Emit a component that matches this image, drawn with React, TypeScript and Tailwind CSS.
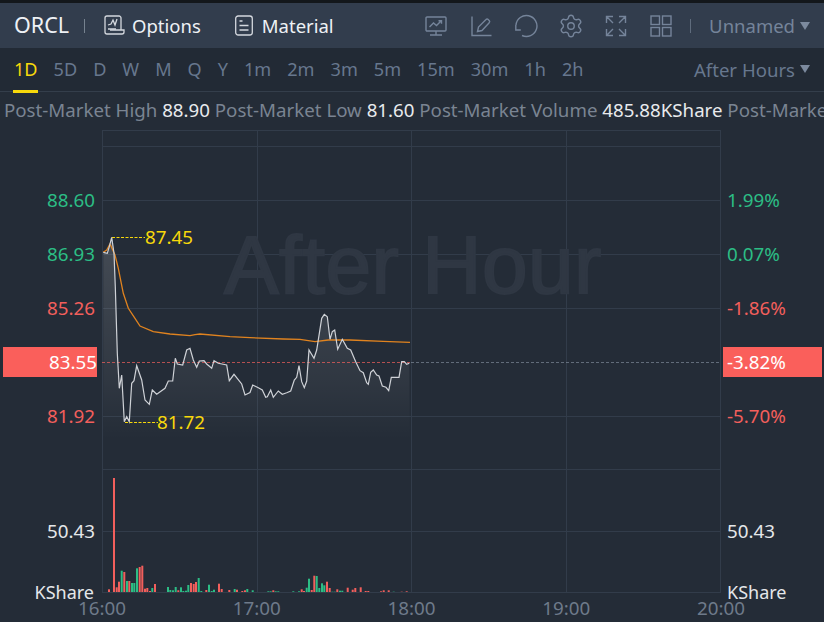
import React from "react";
import { Settings } from "lucide-react";

const RED = "#f25f5c";
const GREEN = "#2cbd85";
const GRID = "#323c4a";

const PERIODS = ["5D", "D", "W", "M", "Q", "Y", "1m", "2m", "3m", "5m", "15m", "30m", "1h", "2h"];
const TIMES = ["16:00", "17:00", "18:00", "19:00", "20:00"];

// price line, page pixels
const PRICE: [number, number][] = [
  [103.3, 252.3], [107.3, 253.3], [109.3, 246.7], [111.7, 237.3], [114, 253.3], [115.3, 286.7], [117.3, 353.3],
  [119.3, 388.3], [121.7, 375], [124.3, 421.7], [126.7, 416.7], [129.3, 421.7], [131.7, 383.3], [134, 380.7],
  [136.7, 365.7], [141.7, 380], [145, 400], [149.3, 404.3], [152.3, 390], [156.7, 394.3], [165, 388.3],
  [168.3, 381], [172.7, 381], [175.3, 358.3], [177.3, 364], [182.7, 365], [186.7, 350], [190, 348.3],
  [193.3, 360], [196.7, 367.3], [199.3, 361], [204, 360.7], [206.7, 364], [211.7, 368.3], [214, 360.7],
  [218.3, 363.3], [226.7, 365], [229.3, 380.7], [234, 374.3], [241.7, 384], [245, 395], [250, 392.5],
  [252.7, 385], [258.3, 387.7], [262.3, 390], [265.7, 397.3], [267.3, 396.7], [270.7, 390], [273.3, 397.3],
  [278.3, 391], [282.3, 394.3], [286.7, 392.7], [290.7, 391], [294.3, 380], [296.7, 377.3], [299, 365.7],
  [301.7, 381.7], [304.3, 387.7], [306.7, 381], [309, 350], [314, 358.3], [316.7, 350], [321.7, 318.3],
  [324.3, 314.3], [327.3, 316.7], [330, 339.3], [332.3, 331.7], [334.7, 330], [337.7, 349.3], [342.3, 339.3],
  [347.3, 348.3], [350.7, 350], [355.7, 361.7], [360, 370.7], [363.3, 372.7], [366.7, 382.7], [368.3, 384.3],
  [370.7, 372.3], [373.3, 370], [376.7, 375], [379, 376], [382.3, 386], [386, 387.3], [388.7, 390.7],
  [391.3, 377.3], [399, 377.3], [401.7, 361.7], [404.3, 361.7], [406.7, 364.3], [409.3, 363.3],
];

const AVERAGE: [number, number][] = [
  [103.3, 252.3], [106.7, 250], [110, 244], [115, 255], [118.3, 268.3], [123.3, 293.3], [128.3, 308.3],
  [135, 318.3], [140, 326], [153.3, 331.7], [170, 334], [190, 335.7], [195, 334.7], [200, 334], [230, 336.7],
  [250, 337.7], [283.3, 339], [300, 339.3], [315, 341.7], [328.3, 340], [350, 340], [383.3, 341.3], [410, 342.3],
];

// volume bars: x, top, up?
const VOLUME: [number, number, number][] = [
  [109, 589.3, 0], [114, 478, 0], [116.7, 587.3, 0], [119, 581.7, 0], [121.7, 570.7, 1], [124.3, 572, 0],
  [127, 581, 1], [129.3, 581, 0], [132, 583, 1], [134.3, 583, 1], [137, 568.3, 1], [139.7, 567, 0],
  [142.3, 565.7, 0], [145, 588.7, 0], [147.3, 588, 0], [150, 591, 0], [152.3, 588, 1], [155, 584, 0],
  [168, 587, 1], [170.3, 590, 1], [173, 590.3, 1], [175.7, 587, 1], [178.3, 590.3, 0], [181, 587.3, 1],
  [183.3, 591, 1], [186, 590.7, 1], [188.3, 585, 1], [191, 583, 0], [193.7, 584, 0], [196, 582, 0],
  [198.7, 578, 1], [201.3, 591, 1], [206.3, 590, 0], [209, 584.7, 1], [211.7, 591, 1], [214, 589.7, 1],
  [219, 583.7, 0], [221.7, 589, 0], [229.3, 590, 0], [234.7, 589, 1], [237, 589.7, 0], [242.3, 591, 0],
  [245, 590.3, 0], [247.3, 589, 1], [252.7, 590.3, 1], [268.3, 591.3, 1], [270.7, 591.3, 1], [273.3, 590.3, 0],
  [275.7, 591.3, 1], [278.3, 591.3, 1], [293.3, 591.3, 1], [299, 591.3, 1], [301.7, 589.3, 0], [304, 591, 0],
  [306.7, 587.7, 1], [309, 578.7, 1], [311.7, 590, 0], [314.3, 575.7, 0], [316.7, 576, 1], [319.3, 588, 1],
  [322, 583.3, 1], [324.3, 585.3, 1], [327, 581.7, 0], [329.7, 588, 0], [332.3, 591.7, 1], [334.7, 591.7, 1],
  [337.3, 589.3, 0], [340, 590.7, 1], [342.3, 590.7, 1], [347.7, 587.7, 0], [352.7, 589.7, 0], [355.3, 588, 0],
  [360.7, 587.3, 0], [365.7, 591, 0], [368.3, 591, 0], [381, 591.3, 0], [383.7, 590.3, 0], [388.7, 590.3, 0],
  [393.7, 591.7, 1], [401.7, 591.7, 0], [406.7, 591.3, 0],
];

const toPoints = (pts: [number, number][]) => pts.map(([x, y]) => `${x},${y}`).join(" ");

function Caret() {
  return <span className="ml-[5px] h-0 w-0 border-x-[5px] border-t-[8px] border-x-transparent border-t-[#7c8a9e]" />;
}

function ToolIcon({ children }: { children: React.ReactNode }) {
  return (
    <svg width="24" height="24" viewBox="0 0 24 24" fill="none" stroke="#75849a" strokeWidth="1.4">
      {children}
    </svg>
  );
}

function ToolIcons() {
  return (
    <div className="flex items-center gap-[21px]">
      <ToolIcon>
        <rect x="2" y="3" width="20" height="14" rx="1" />
        <path d="M5.5 13l4-4 3 2.5L17 7M14.5 6.8h3v3M12 17v4M6 21h12" />
      </ToolIcon>
      <ToolIcon>
        <path d="M3 2.5V21.5H22.5M8.5 17.5l1-4.500L17 5.500a1.500 1.500 0 0 1 2.200 0l1 1.100a1.500 1.500 0 0 1 0 2.100L13 16.500z" />
      </ToolIcon>
      <ToolIcon>
        <path d="M8 21.500A10.500 10.500 0 1 0 2 11" />
        <path d="M1.800 11v5h5" />
      </ToolIcon>
      <Settings size={26} strokeWidth={1.3} className="-mx-px text-[#75849a]" />
      <ToolIcon>
        <path d="M2.5 9V2.500H9M2.500 2.500L9 9M21.500 9V2.500H15M21.500 2.500L15 9M2.500 15v6.500H9M2.500 21.500L9 15M21.500 15v6.500H15M21.500 21.500L15 15" />
      </ToolIcon>
      <ToolIcon>
        <rect x="2" y="2" width="8.500" height="8.500" />
        <rect x="13.500" y="2" width="8.500" height="8.500" />
        <rect x="2" y="13.500" width="8.500" height="8.500" />
        <rect x="13.500" y="13.500" width="8.500" height="8.500" />
      </ToolIcon>
    </div>
  );
}

function Toolbar() {
  return (
    <div className="flex h-[45px] items-center bg-[#323d4d] pl-[14px] pr-[14px] text-[#eef1f5]">
      <span className="text-[21.5px]">ORCL</span>
      <span className="ml-[15px] mr-[19px] h-[14px] w-px bg-[#76828f]" />
      <svg width="21" height="21" viewBox="0 0 21 21" fill="none" stroke="#d4d8de" strokeWidth="1.300">
        <path d="M17 15V3a2 2 0 0 0-2-2H3a2 2 0 0 0-2 2v14a2 2 0 0 0 2 2h15a2 2 0 0 0 2-2v-2H6" />
        <path d="M4 10l3-1 2-4 2 5 2-6M4 14h8" />
      </svg>
      <span className="ml-[7px] text-[18.5px]">Options</span>
      <svg className="ml-[34px]" width="18" height="21" viewBox="0 0 18 21" fill="none" stroke="#d4d8de" strokeWidth="1.300">
        <rect x="0.700" y="1" width="16.600" height="19" rx="2.500" />
        <path d="M4.500 6h3M4.500 10.500h9M4.500 15h9" />
      </svg>
      <span className="ml-[9px] text-[18.5px]">Material</span>
      <div className="ml-auto flex items-center">
        <ToolIcons />
        <span className="ml-[17px] mr-[18px] h-[14px] w-px bg-[#5f6c7d]" />
        <span className="pt-px text-[18.5px] text-[#75849a]">Unnamed</span>
        <Caret />
      </div>
    </div>
  );
}

function PeriodBar() {
  return (
    <div className="flex h-[44px] items-center border-b border-[#343e4b] bg-[#222a35] pl-[14px] pr-[14px] text-[18.1px] text-[#67778e]">
      <div className="relative text-[#f7d80b]">
        1D
        <span className="absolute -bottom-[10px] -left-px h-[3px] w-[25px] bg-[#f7d80b]" />
      </div>
      <div className="ml-4 flex gap-4">
        {PERIODS.map((p) => (
          <span key={p}>{p}</span>
        ))}
      </div>
      <div className="ml-auto flex items-center text-[18.6px]">
        After Hours
        <Caret />
      </div>
    </div>
  );
}

function InfoBar() {
  return (
    <div className="h-[38px] overflow-hidden whitespace-nowrap pl-[4px] pt-[4px] text-[18.7px] text-[#7a8492]">
      Post-Market High <span className="text-[#e8eaed]">88.90</span> Post-Market Low{" "}
      <span className="text-[#e8eaed]">81.60</span> Post-Market Volume{" "}
      <span className="text-[#e8eaed]">485.88KShare</span> Post-Market Amount
    </div>
  );
}

function AxisRow({ children, className }: { children: React.ReactNode; className: string }) {
  return <div className={`flex h-[54px] items-center ${className}`}>{children}</div>;
}

function LeftAxis() {
  return (
    <div className="w-[102px] shrink-0 pt-[43px] text-[18.8px]">
      <AxisRow className="justify-end pr-[7px] text-[#2cbd85]">88.60</AxisRow>
      <AxisRow className="justify-end pr-[7px] text-[#2cbd85]">86.93</AxisRow>
      <AxisRow className="justify-end pr-[7px] text-[#f25f5c]">85.26</AxisRow>
      <AxisRow className="justify-end pr-[7px] text-white">
        <div className="-mr-[2px] ml-[3px] flex h-[30px] flex-1 items-center justify-end bg-[#fa5f5b]">83.55</div>
      </AxisRow>
      <AxisRow className="justify-end pr-[7px] text-[#f25f5c]">81.92</AxisRow>
      <div className="mt-[61px] flex h-[54px] items-center justify-end pr-[7px] text-[#e4e7ea]">50.43</div>
      <div className="mt-[7px] flex h-[54px] items-center justify-end pr-[8px] text-[18px] text-[#e4e7ea]">KShare</div>
    </div>
  );
}

function RightAxis() {
  return (
    <div className="w-[103px] shrink-0 pl-[6px] pt-[43px] text-[18.8px]">
      <AxisRow className="text-[#2cbd85]">1.99%</AxisRow>
      <AxisRow className="text-[#2cbd85]">0.07%</AxisRow>
      <AxisRow className="text-[#f25f5c]">-1.86%</AxisRow>
      <AxisRow className="text-white">
        <div className="-ml-[4px] mr-[2px] flex h-[30px] flex-1 items-center bg-[#fa5f5b] pl-[4px]">-3.82%</div>
      </AxisRow>
      <AxisRow className="text-[#f25f5c]">-5.70%</AxisRow>
      <div className="mt-[61px] flex h-[54px] items-center text-[#e4e7ea]">50.43</div>
      <div className="mt-[7px] flex h-[54px] items-center text-[18px] text-[#e4e7ea]">KShare</div>
    </div>
  );
}

function Chart() {
  const area = `103.3,470 ${toPoints(PRICE)} 410,470`;
  return (
    <svg className="block" width="619" height="463" viewBox="102 130 619 463" fill="none">
      <defs>
        <linearGradient id="fade" gradientUnits="userSpaceOnUse" x1="0" y1="237" x2="0" y2="440">
          <stop offset="0" stopColor="#ffffff" stopOpacity="0.15" />
          <stop offset="0.7" stopColor="#ffffff" stopOpacity="0.055" />
          <stop offset="1" stopColor="#ffffff" stopOpacity="0" />
        </linearGradient>
      </defs>
      {[130.5, 146.5, 200.5, 254.5, 308.5, 416.5, 469.5, 531.5, 592.5].map((y) => (
        <line key={y} x1="102" x2="721" y1={y} y2={y} stroke={GRID} />
      ))}
      {[102.5, 257.5, 411.5, 566.5, 720.5].map((x) => (
        <line key={x} x1={x} x2={x} y1="130" y2="593" stroke={GRID} />
      ))}
      <polygon points={area} fill="url(#fade)" />
      <line x1="411" x2="721" y1="362.500" y2="362.500" stroke="#8c98a6" strokeDasharray="3 2" strokeOpacity="0.6" />
      <line x1="102" x2="411" y1="362.500" y2="362.500" stroke={RED} strokeDasharray="3 2" strokeOpacity="0.7" />
      <polyline points={toPoints(AVERAGE)} stroke="#e0831f" strokeWidth="1.300" />
      <polyline points={toPoints(PRICE)} stroke="#cfd2d7" strokeWidth="1.200" />
      <path d="M112 237.500H145" stroke="#f7d80b" strokeDasharray="3 1.500" />
      <path d="M125 422.500H158" stroke="#f7d80b" strokeDasharray="3 1.500" />
      {VOLUME.map(([x, top, up]) => (
        <rect key={x} x={x - 1} y={top} width="2" height={592 - top} fill={up ? GREEN : RED} />
      ))}
    </svg>
  );
}

export default function App() {
  return (
    <div className="h-[622px] w-[824px] overflow-hidden bg-[#242c37] font-['Noto_Sans',sans-serif]">
      <div className="h-[3px] bg-[#13171b]" />
      <Toolbar />
      <PeriodBar />
      <InfoBar />
      <div className="relative flex">
        <LeftAxis />
        <div className="w-[619px] shrink-0">
          <Chart />
          <div className="-mx-[24px] mt-[1px] flex justify-between text-[18.8px] text-[#6e7a8a]">
            {TIMES.map((t) => (
              <span key={t} className="w-[48px] text-center">{t}</span>
            ))}
          </div>
        </div>
        <RightAxis />
        {/* value tags and watermark sit over the plot */}
        <span className="absolute left-[145px] top-[93px] text-[18.8px] text-[#f7d80b]">87.45</span>
        <span className="absolute left-[157px] top-[278px] text-[18.8px] text-[#f7d80b]">81.72</span>
        <span className="pointer-events-none absolute left-[224px] top-[87px] whitespace-nowrap font-['Liberation_Sans',sans-serif] text-[82px] leading-[96px] tracking-[0.4px] text-[#2f3743] [-webkit-text-stroke:2px_#2f3743]">
          After Hour
        </span>
      </div>
    </div>
  );
}
